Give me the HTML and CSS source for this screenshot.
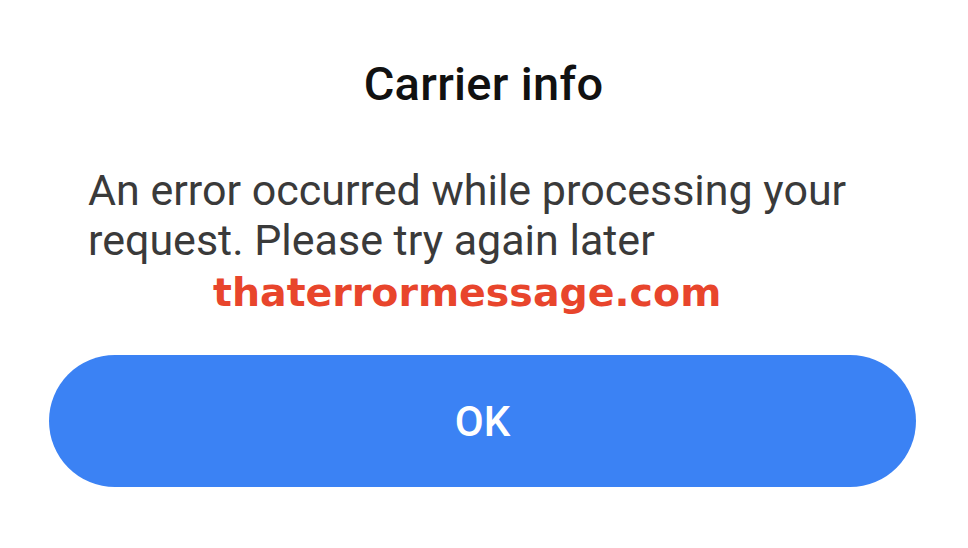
FILE: index.html
```html
<!DOCTYPE html>
<html lang="en">
<head>
    <meta charset="UTF-8">
    <meta name="viewport" content="width=device-width, initial-scale=1.0">
    <title>Carrier info</title>
    <link rel="stylesheet" href="styles.css">
</head>
<body>
    <div class="dialog">
        <h1 class="dialog-title">Carrier info</h1>

        <p class="dialog-message">An error occurred while processing your request. Please try again later</p>

        <div class="watermark">thaterrormessage.com</div>

        <button class="ok-button">OK</button>
    </div>
</body>
</html>
```

FILE: styles.css
```css
body {
    margin: 0;
    background-color: #ffffff;
    font-family: 'Roboto', 'Liberation Sans', sans-serif;
}

.dialog {
    width: 968px;
    height: 548px;
    padding: 56px 52px 0 49px;
    box-sizing: border-box;
    display: flex;
    flex-direction: column;
}

.dialog-title {
    margin: 0;
    text-align: center;
    font-size: 47px;
    font-weight: 500;
    line-height: 56px;
    letter-spacing: 0.3px;
    color: #111;
    padding-left: 2px;
}

.dialog-message {
    margin: 53px 0 0 39px;
    font-size: 43px;
    line-height: 50px;
    color: #3a3a3a;
}

.watermark {
    height: 46px;
    margin: 4px 0 0 164px;
    font-family: 'DejaVu Sans', sans-serif;
    font-weight: bold;
    font-size: 39.5px;
    line-height: 46px;
    color: #e8452c;
}

.ok-button {
    margin-top: 40px;
    height: 132px;
    flex-shrink: 0;
    border: none;
    border-radius: 66px;
    background-color: #3b82f4;
    color: #ffffff;
    font-family: 'Roboto', sans-serif;
    font-size: 42px;
    font-weight: 500;
    cursor: pointer;
}
```
